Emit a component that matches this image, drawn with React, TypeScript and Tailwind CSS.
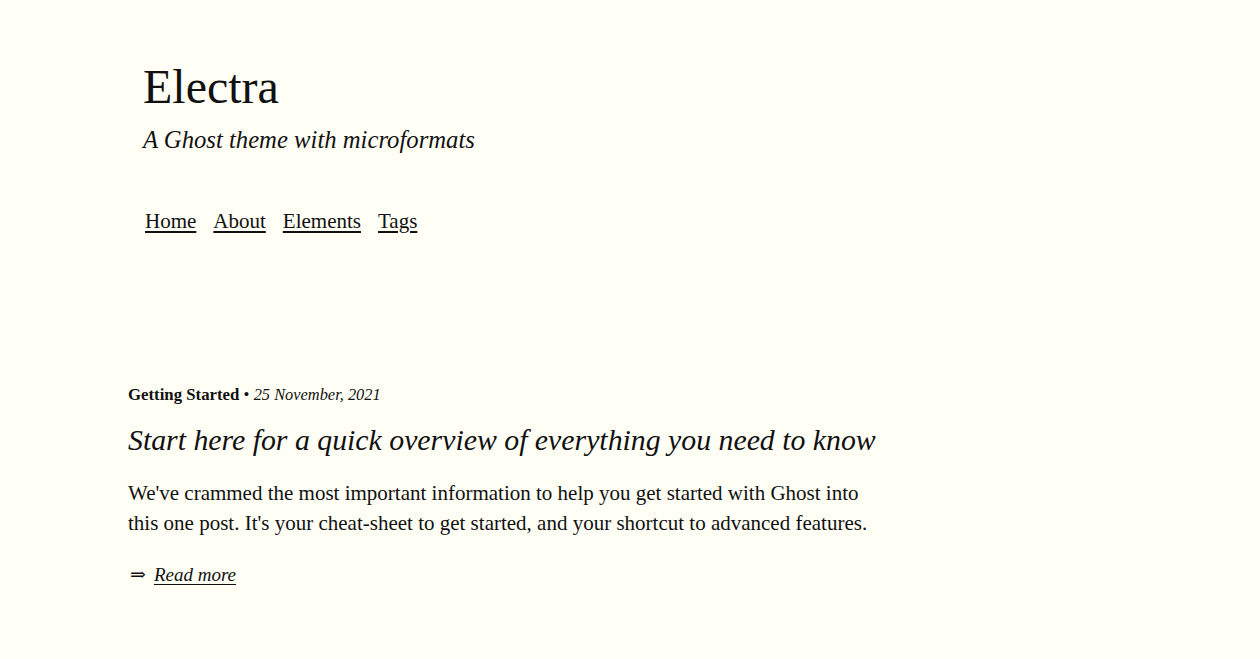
export default function App() {
  const serif = { fontFamily: '"Liberation Serif", "DejaVu Serif", serif' };
  return (
    <div className="min-h-[659px] w-full bg-[#fffff6] text-[#111111]" style={serif}>
      <div className="pl-[128px]">
        <header className="pl-[15px] pt-[59px]">
          <h1 className="text-[48px] leading-[56px] font-normal">Electra</h1>
          <p className="mt-[9px] text-[24.7px] leading-[32px] italic">A Ghost theme with microformats</p>
          <nav className="mt-[51px] flex gap-[17px] pl-[2px] text-[21px] leading-[28px]">
            <a className="underline underline-offset-[3px]" href="#">Home</a>
            <a className="underline underline-offset-[3px]" href="#">About</a>
            <a className="underline underline-offset-[3px]" href="#">Elements</a>
            <a className="underline underline-offset-[3px]" href="#">Tags</a>
          </nav>
        </header>
        <article className="mt-[148px] w-[760px]">
          <div className="text-[16.8px] leading-[24px]">
            <span className="font-semibold">Getting Started</span>
            <span> • </span>
            <span className="italic text-[16.4px]">25 November, 2021</span>
          </div>
          <h2 className="mt-[13px] text-[29.8px] leading-[40px] italic font-normal">
            Start here for a quick overview of everything you need to know
          </h2>
          <p className="mt-[18px] text-[21px] leading-[30px]">
            We've crammed the most important information to help you get started with Ghost into this one post. It's your cheat-sheet to get started, and your shortcut to advanced features.
          </p>
          <div className="mt-[22px] text-[19px] leading-[30px] flex gap-[8px] pl-[2px]">
            <span>⇒</span>
            <a className="italic underline underline-offset-[3px]" href="#">Read more</a>
          </div>
        </article>
      </div>
    </div>
  );
}
